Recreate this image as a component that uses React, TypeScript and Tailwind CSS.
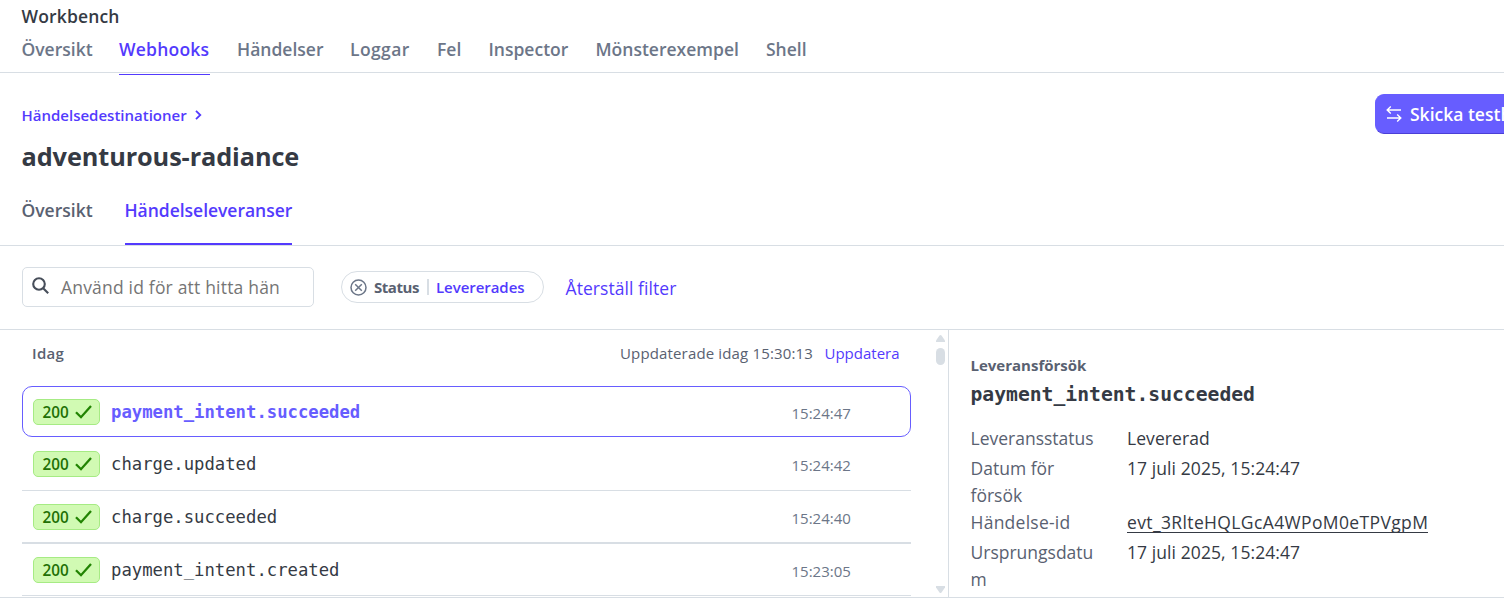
import React from "react";

const tabs = [
  { label: "Översikt", box: "w-[70.5px]" },
  { label: "Webhooks", box: "w-[91px] tracking-[0.22px]", active: true },
  { label: "Händelser", box: "w-[86px]" },
  { label: "Loggar", box: "w-[60px] tracking-[0.4px]" },
  { label: "Fel", box: "w-[24.5px]" },
  { label: "Inspector", box: "w-[80px]" },
  { label: "Mönsterexempel", box: "w-[143.5px]" },
  { label: "Shell", box: "w-[42px]" },
];

const rows = [
  { name: "charge.updated", time: "15:24:42", box: "h-[54px] border-b pt-[14px]" },
  { name: "charge.succeeded", time: "15:24:40", box: "h-[53px] border-b-2 pt-[13px]" },
  { name: "payment_intent.created", time: "15:23:05", box: "h-[52px] border-b pt-[13px]" },
];

function Badge() {
  return (
    <span className="flex h-[26px] w-[67px] shrink-0 items-center gap-[5px] rounded-[5px] border border-[#a6eb84] bg-[#d1fab3] pl-[8.5px] text-[15.3px] font-semibold leading-none text-[#217005]">
      <span className="w-[27px] pt-[2px]">200</span>
      <svg width="17" height="14" viewBox="0 0 17 14" fill="none" stroke="#228403" strokeWidth="2.3">
        <path d="M1 7.2 6 12.2 16 1" />
      </svg>
    </span>
  );
}

function Delivery({ name, time, active }: { name: string; time: string; active?: boolean }) {
  return (
    <>
      <Badge />
      <span
        className={
          active
            ? "ml-[11px] w-[680.5px] pt-px font-['DejaVu_Sans_Mono',monospace] text-[17.25px] font-bold leading-[24px] text-[#675dff]"
            : "ml-[11px] w-[680.5px] pt-px font-['DejaVu_Sans_Mono',monospace] text-[17.25px] leading-[24px] text-[#353a44]"
        }
      >
        {name}
      </span>
      <span className="pt-[2px] text-[15px] leading-[24px] text-[#6c7688]">{time}</span>
    </>
  );
}

function Detail({ label, height, children }: { label: React.ReactNode; height: string; children: React.ReactNode }) {
  return (
    <div className={`flex ${height}`}>
      <dt className="w-[156.5px] shrink-0 text-[#596171]">{label}</dt>
      <dd className="tracking-[0.08px] text-[#353a44]">{children}</dd>
    </div>
  );
}

export default function App() {
  return (
    <div className="flex h-[598px] w-full flex-col overflow-hidden border-b border-[#d8dee4] bg-white font-['Open_Sans',sans-serif] text-[17.5px] whitespace-nowrap text-[#353a44]">
      <header className="h-[73px] shrink-0 border-b border-[#d8dee4] pl-[21.5px]">
        <div className="pt-[4px] text-[17.5px] font-semibold leading-[25px] tracking-[0.15px]">Workbench</div>
        <nav className="flex h-[46px] gap-[27px] pt-[8px] font-semibold leading-[25px] text-[#6c7688]">
          {tabs.map((t) => (
            <a
              key={t.label}
              className={
                t.active
                  ? `${t.box} h-[38px] shrink-0 border-b border-[#533afd] text-[#533afd]`
                  : `${t.box} shrink-0`
              }
            >
              {t.label}
            </a>
          ))}
        </nav>
      </header>

      <section className="h-[173px] shrink-0 border-b border-[#d8dee4] pl-[21.5px]">
        <div className="flex h-[65px] justify-between pt-[21px]">
          <a className="flex h-[42px] items-center gap-[8px] text-[15px] font-semibold text-[#533afd]">
            <span>Händelsedestinationer</span>
            <svg width="7" height="10" viewBox="0 0 7 10" fill="none" stroke="#533afd" strokeWidth="1.8">
              <path d="M1 .8 5.3 5 1 9.2" />
            </svg>
          </a>
          <button className="flex h-[40px] w-[129.5px] items-center gap-[8px] overflow-hidden rounded-l-[9px] border-y border-l border-[#675dff] border-b-[#4b3fd6] bg-[#675dff] pl-[10.5px] font-semibold text-white">
            <svg className="shrink-0" width="16" height="16" viewBox="0 0 16 16" fill="none" stroke="white" strokeWidth="1.4">
              <path d="M15 4H1.5M4.8.6 1.2 4l3.6 3.4M1 12h13.5M11.2 8.6l3.6 3.4-3.6 3.4" />
            </svg>
            <span>Skicka testh</span>
          </button>
        </div>
        <h1 className="h-[47px] text-[25.3px] font-bold leading-[36px] tracking-[-0.1px]">adventurous-radiance</h1>
        <nav className="flex h-[60px] gap-[32px] pt-[12px] font-semibold leading-[26px] text-[#596171]">
          <a className="w-[71px]">Översikt</a>
          <a className="h-[48px] w-[167px] border-b-2 border-[#533afd] tracking-[-0.03px] text-[#533afd]">Händelseleveranser</a>
        </nav>
      </section>

      <section className="flex h-[84px] shrink-0 border-b border-[#d8dee4] pt-[21px] pl-[22px]">
        <div className="flex h-[40px] w-[292px] items-center rounded-[5px] border border-[#d8dee4] pl-[9px] text-[#757575]">
          <svg className="mb-[3px]" width="17" height="17" viewBox="0 0 17 17" fill="none" stroke="#474e5a" strokeWidth="2.1">
            <circle cx="7" cy="7" r="5.8" />
            <path d="m11.2 11.2 5 5" />
          </svg>
          <span className="ml-[12px] tracking-[0.19px]">Använd id för att hitta hän</span>
        </div>
        <div className="mt-[4px] ml-[27px] flex h-[32px] w-[203px] items-center rounded-full border border-[#d8dee4] pl-[8px] text-[15px] leading-none">
          <svg width="17" height="17" viewBox="0 0 17 17" fill="none" stroke="#6c7688" strokeWidth="1.5">
            <circle cx="8.5" cy="8.5" r="7.5" />
            <path d="m5.2 5.2 6.6 6.6M11.8 5.2l-6.6 6.6" />
          </svg>
          <span className="ml-[7px] w-[46px] font-bold tracking-[-0.45px] text-[#596171]">Status</span>
          <span className="ml-[7px] h-[16px] w-[2px] bg-[#d8dee4]" />
          <span className="ml-[7px] font-semibold tracking-[-0.05px] text-[#533afd]">Levererades</span>
        </div>
        <a className="ml-[21.5px] pt-[9px] leading-[25px] tracking-[0.06px] text-[#533afd]">Återställ filter</a>
      </section>

      <main className="flex min-h-0 flex-1">
        <section className="w-[911px] shrink-0 pl-[22px]">
          <div className="flex h-[56px] pt-[11px] pl-[10px] text-[15px] leading-[24px] text-[#596171]">
            <span className="w-[588px] font-semibold tracking-[0.3px]">Idag</span>
            <span className="w-[204.5px] tracking-[0.15px]">Uppdaterade idag 15:30:13</span>
            <a className="text-[#533afd]">Uppdatera</a>
          </div>
          <div className="flex h-[51px] rounded-[10px] border border-[#675dff] pt-[12px] pl-[10px]">
            <Delivery name="payment_intent.succeeded" time="15:24:47" active />
          </div>
          {rows.map((r) => (
            <div key={r.name} className={`flex border-[#d8dee4] pl-[11px] ${r.box}`}>
              <Delivery name={r.name} time={r.time} />
            </div>
          ))}
        </section>
        <div className="flex w-[38px] shrink-0 flex-col items-end border-r border-[#d8dee4] pt-[5px] pr-[3px] pb-[4px]">
          <svg width="9" height="7" viewBox="0 0 9 7" fill="#d8dee4">
            <path d="M3.5.6Q4.5-.5 5.5.6L9 5.5V7H0V5.5Z" />
          </svg>
          <span className="mt-[6px] h-[17px] w-[9px] rounded-full bg-[#d8dee4]" />
          <svg className="mt-auto" width="9" height="7" viewBox="0 0 9 7" fill="#d8dee4">
            <path d="M3.5 6.4Q4.5 7.5 5.5 6.4L9 1.5V0H0V1.5Z" />
          </svg>
        </div>
        <aside className="pt-[23px] pl-[21.5px]">
          <div className="text-[15px] font-bold leading-[24px] text-[#596171]">Leveransförsök</div>
          <h2 className="h-[48px] pt-[4px] font-['DejaVu_Sans_Mono',monospace] text-[19.7px] font-bold leading-[28px]">
            payment_intent.succeeded
          </h2>
          <dl className="leading-[27px]">
            <Detail label="Leveransstatus" height="h-[30px]">Levererad</Detail>
            <Detail label={<>Datum för<br />försök</>} height="h-[54px]">17 juli 2025, 15:24:47</Detail>
            <Detail label={<span className="tracking-[0.25px]">Händelse-id</span>} height="h-[30px]">
              <a className="inline-block h-[24px] border-b border-[#353a44] tracking-[0.37px]">evt_3RlteHQLGcA4WPoM0eTPVgpM</a>
            </Detail>
            <Detail label={<>Ursprungsdatu<br />m</>} height="h-[54px]">17 juli 2025, 15:24:47</Detail>
          </dl>
        </aside>
      </main>
    </div>
  );
}
